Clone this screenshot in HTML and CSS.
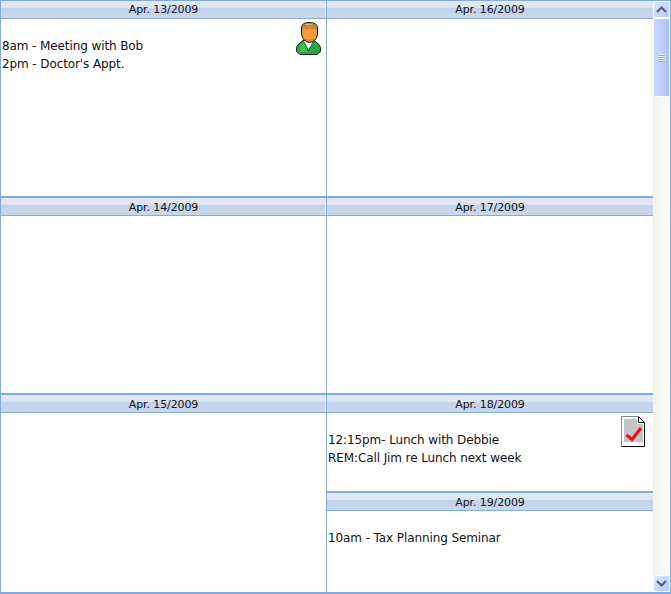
FILE: index.html
```html
<!DOCTYPE html>
<html lang="en">
<head>
<meta charset="utf-8">
<title>Week planner</title>
<link rel="stylesheet" href="styles.css">
</head>
<body>
<div class="planner">
  <div class="column column-left">
    <section class="day day-first">
      <h2 class="day-head">Apr. 13/2009</h2>
      <div class="day-body">
        <svg class="icon icon-person" width="25" height="33" viewBox="0 0 25 33" aria-hidden="true">
          <path d="M7 18.5 L2 22.5 L0.5 25.5 V29.5 L3 31.5 L4 32.5 H21 L24.5 29.5 V25.5 L23 22.5 L18 18.5 Z" fill="#2fa34a" stroke="#0b2a12"/>
          <path d="M4 24 L8 20 L12 30 L4 30 Z" fill="#45bb5f"/>
          <path d="M8 19 H17 L16 23 L12.5 27 L9 23 Z" fill="#f5f7f5"/>
          <path d="M8 20 L12.5 29 L17 20" fill="none" stroke="#0f6a25"/>
          <path d="M5.5 6 Q5.5 0.5 13 0.5 Q21.5 0.5 21.5 6 V12 Q20.5 19.5 13.5 20.5 Q6.5 19.5 5.5 12 Z" fill="#f89a3e" stroke="#1c1208"/>
          <path d="M6 7 Q6 1 13 1 Q21 1 21 7 L19.5 8 Q18.5 4.5 13 4.5 Q7.5 4.5 7 8 Z" fill="#b18a4c"/>
          <path d="M9 2.5 H16" stroke="#d4b06a"/>
          <path d="M9 6.5 Q13 5 18 6.5" fill="none" stroke="#d8602a"/>
          <path d="M9 16 Q13.5 19 18 16 L17 19 H10 Z" fill="#e87a22"/>
        </svg>
        <p class="entry">8am - Meeting with Bob</p>
        <p class="entry">2pm - Doctor's Appt.</p>
      </div>
    </section>
    <section class="day">
      <h2 class="day-head">Apr. 14/2009</h2>
      <div class="day-body"></div>
    </section>
    <section class="day day-last">
      <h2 class="day-head">Apr. 15/2009</h2>
      <div class="day-body"></div>
    </section>
  </div>
  <div class="column">
    <section class="day day-first">
      <h2 class="day-head">Apr. 16/2009</h2>
      <div class="day-body"></div>
    </section>
    <section class="day">
      <h2 class="day-head">Apr. 17/2009</h2>
      <div class="day-body"></div>
    </section>
    <section class="day day-short">
      <h2 class="day-head">Apr. 18/2009</h2>
      <div class="day-body">
        <svg class="icon icon-note" width="25" height="31" viewBox="0 0 25 31" aria-hidden="true">
          <path d="M0.5 0.5 H17.5 L23.5 6.5 V30.5 H0.5 Z" fill="#fff"/>
          <path d="M0.5 30.5 V0.5 H17.5" fill="none" stroke="#8a8a8a"/>
          <path d="M0.5 30.5 H23.5 V6.5" fill="none" stroke="#111"/>
          <path d="M17.5 0.5 L23.5 6.5 H17.5 Z" fill="#eee" stroke="#111"/>
          <path d="M3 3 H16 V8 H22 V26 H3 Z" fill="#c4c4c4"/>
          <path d="M5.5 19 L11 23.5 L20 12" fill="none" stroke="#e8101c" stroke-width="3.2"/>
        </svg>
        <p class="entry">12:15pm- Lunch with Debbie</p>
        <p class="entry">REM:Call Jim re Lunch next week</p>
      </div>
    </section>
    <section class="day day-last">
      <h2 class="day-head">Apr. 19/2009</h2>
      <div class="day-body">
        <p class="entry">10am - Tax Planning Seminar</p>
      </div>
    </section>
  </div>
  <div class="scrollbar">
    <div class="scroll-btn">
      <svg width="11" height="7" viewBox="0 0 11 7" aria-hidden="true"><path d="M1 6 L5.5 1.5 L10 6" fill="none" stroke="#4d6185" stroke-width="2"/></svg>
    </div>
    <div class="scroll-thumb">
      <span class="grip"></span><span class="grip"></span><span class="grip"></span><span class="grip"></span>
    </div>
    <div class="scroll-track"></div>
    <div class="scroll-btn">
      <svg width="11" height="7" viewBox="0 0 11 7" aria-hidden="true"><path d="M1 1 L5.5 5.5 L10 1" fill="none" stroke="#4d6185" stroke-width="2"/></svg>
    </div>
  </div>
</div>
</body>
</html>
```
FILE: styles.css
```css
* { box-sizing: border-box; }
html, body { margin: 0; padding: 0; background: #fff; }
body { width: 671px; height: 594px; overflow: hidden; }

.planner {
  display: flex;
  width: 671px;
  height: 594px;
  border: 1px solid #84a9dc;
  border-bottom-width: 2px;
  font: 12px "DejaVu Sans", Verdana, sans-serif;
  letter-spacing: -0.1px;
  color: #111;
}
.column { width: 326px; display: flex; flex-direction: column; }
.column-left { width: 326px; border-right: 1px solid #84a9dc; }

.day { height: 197px; display: flex; flex-direction: column; }
.day-first { height: 195px; }
.day-short { height: 98px; }
.day-last { flex: 1; height: auto; }

.day-head {
  height: 20px;
  margin: 0;
  border-top: 2px solid #84a9dc;
  border-bottom: 1px solid #84a9dc;
  background: linear-gradient(#e1e9f4 0, #dbe5f2 41%, #c2d3ea 42%, #c8d7ec 100%);
  font: 11px "DejaVu Sans", Verdana, sans-serif;
  letter-spacing: -0.1px;
  line-height: 19px;
  text-align: center;
}
.column-left .day-head { box-shadow: inset -1px 0 0 #eaf0f8; }
.day-first .day-head { height: 18px; border-top: 0; line-height: 18px; }
.day-body { flex: 1; position: relative; padding-top: 18px; padding-left: 1px; }
.entry { margin: 0; height: 18px; line-height: 18px; white-space: nowrap; }
.icon { position: absolute; }
.icon-person { right: 5px; top: 3px; }
.icon-note { right: 7px; top: 3px; }

.scrollbar {
  width: 17px;
  display: flex;
  flex-direction: column;
  background: linear-gradient(90deg, #f3f1ec, #fefefb);
}
.scroll-btn {
  width: 17px;
  height: 17px;
  display: flex;
  align-items: center;
  justify-content: center;
  border: 1px solid #fff;
  border-radius: 2px;
  background: linear-gradient(135deg, #dfe8fd, #b5c8f6);
}
.scroll-thumb {
  width: 17px;
  height: 79px;
  display: flex;
  flex-direction: column;
  align-items: center;
  justify-content: center;
  border: 1px solid #fff;
  border-radius: 2px;
  background: linear-gradient(90deg, #c9d7fb, #bccdf9 60%, #a9bcef);
}
.grip { width: 7px; height: 1px; background: #eef3fe; box-shadow: 0 1px 0 #8fa8e0; }
.grip + .grip { margin-top: 1px; }
.scroll-track { flex: 1; }
```
